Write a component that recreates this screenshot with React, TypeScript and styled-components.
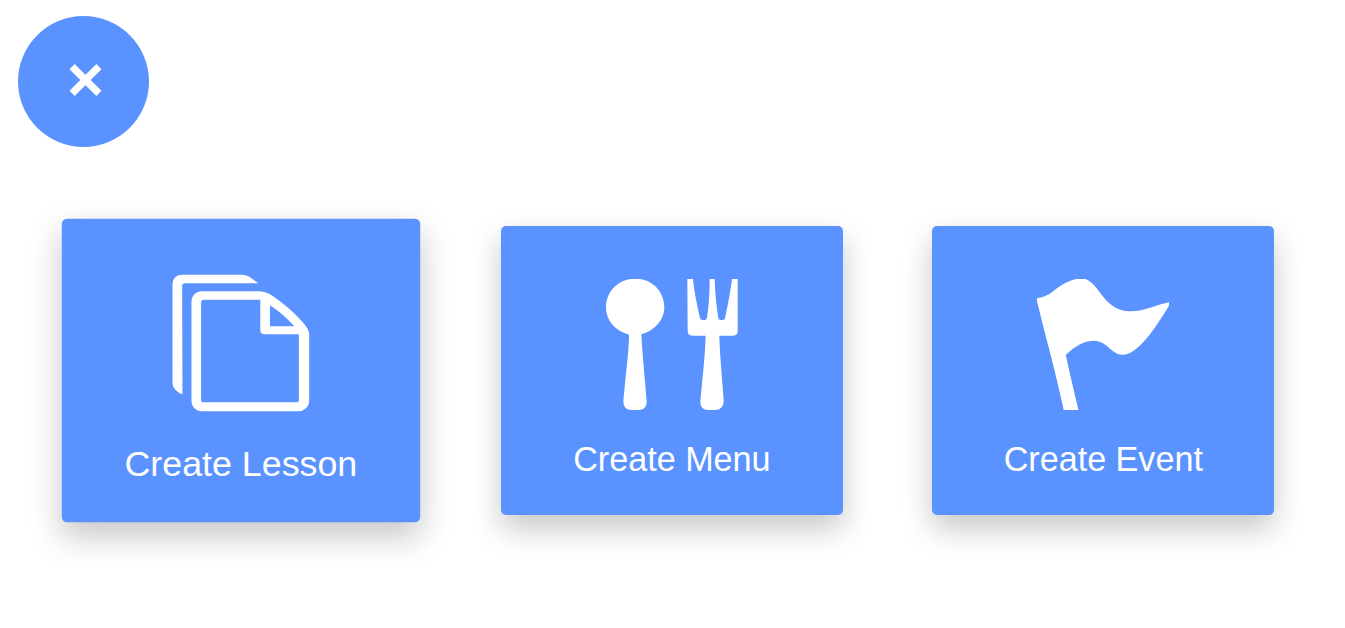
import type { ReactNode } from "react";
import styled, { createGlobalStyle } from "styled-components";

type Action = {
  label: string;
  icon: ReactNode;
  active?: boolean;
};

const actions: Action[] = [
  { label: "Create Lesson", icon: <LessonIcon />, active: true },
  { label: "Create Menu", icon: <MenuIcon /> },
  { label: "Create Event", icon: <EventIcon /> },
];

export default function App() {
  return (
    <Page>
      <GlobalStyle />
      <CloseButton aria-label="Close">
        <CloseIcon />
      </CloseButton>
      <Cards>
        {actions.map(({ label, icon, active }) => (
          <Card key={label} $active={active}>
            {icon}
            <Label>{label}</Label>
          </Card>
        ))}
      </Cards>
    </Page>
  );
}

function CloseIcon() {
  return (
    <CloseSvg viewBox="0 0 33 32">
      <path d="M3.1 2.6L29.9 29.4M29.9 2.6L3.1 29.4" />
    </CloseSvg>
  );
}

function LessonIcon() {
  return (
    <IconSvg viewBox="34 43 416 411" preserveAspectRatio="none">
      <path d="M66 401Q54 397 46 389Q36 380 36 370V72Q36 58 46 50Q54 43 67 43H245Q256 44 268 51L294 69H73Q65 69 65 77Z" />
      <path
        fillRule="evenodd"
        d="M125 93H300Q316 93 332 104Q386 140 425 183Q447 207 447 222V421Q447 434 437 443Q428 452 415 452H125Q111 452 102 443Q93 434 93 420V125Q93 111 102 102Q111 93 125 93ZM130 119Q122 119 122 127V418Q122 425 130 425H408Q416 425 416 418V222H314Q300 222 300 209V119ZM329 135V198H402Q370 161 329 135Z"
      />
    </IconSvg>
  );
}

function MenuIcon() {
  return (
    <IconSvg viewBox="33 42 396 393" preserveAspectRatio="none">
      <path d="M121 41C170 41 208 78 208 127C208 163 182 196 139 208Q141 250 147 315L155 408Q156 434 131 435H110Q84 434 85 408L94 315Q102 248 102 209C58 197 33 165 33 127C33 78 72 41 121 41Z" />
      <path d="M277 42H294Q297 80 315 160Q317 165 323 165H329Q335 165 336 158Q344 105 344 42H359Q361 105 370 160Q371 165 377 165H383Q389 165 390 160Q406 85 411 42H428V198Q428 212 414 212H373Q374 260 379 315L386 406Q387 434 362 435H340Q315 434 316 407L325 315Q331 250 332 212H292Q278 212 278 198Z" />
    </IconSvg>
  );
}

function EventIcon() {
  return (
    <IconSvg viewBox="36 42 395 393" preserveAspectRatio="none">
      <path d="M36 100Q57 96 75 86C100 66 125 48 153 42H181C226 58 235 137 314 139C359 140 388 120 431 112V122C395 180 341 269 292 269C258 269 248 228 206 227Q165 226 122 270Q138 343 160 435H116C91 316 62 218 36 108Z" />
    </IconSvg>
  );
}

const GlobalStyle = createGlobalStyle`
  body {
    margin: 0;
    background: #fff;
    font-family: Arial, "Liberation Sans", sans-serif;
  }
`;

const Page = styled.main`
  box-sizing: border-box;
  height: 628px;
  padding: 16px 18px;
  overflow: hidden;
`;

const CloseButton = styled.button`
  display: flex;
  align-items: center;
  justify-content: center;
  width: 131px;
  height: 131px;
  padding: 0 0 3px 4px;
  border: none;
  border-radius: 50%;
  background: #5a93ff;
`;

const CloseSvg = styled.svg`
  width: 33px;
  height: 32px;
  fill: none;
  stroke: #fff;
  stroke-width: 7.3;
`;

const Cards = styled.div`
  display: flex;
  gap: 89.6px;
  padding: 79px 0 0 51.6px;
`;

const Card = styled.div<{ $active?: boolean }>`
  box-sizing: border-box;
  display: flex;
  flex: none;
  flex-direction: column;
  align-items: center;
  width: 341.8px;
  height: 289px;
  padding-top: 53px;
  border-radius: 5px;
  background: #5a93ff;
  box-shadow: 0 13.5px 30px rgba(0, 0, 0, 0.22);
  transform: ${({ $active }) => ($active ? "scale(1.048, 1.05)" : "none")};
`;

const IconSvg = styled.svg`
  width: 132px;
  height: 131px;
  fill: #fff;
`;

const Label = styled.span`
  margin-top: 29px;
  color: #fff;
  font-size: 34.15px;
  line-height: 40px;
`;
